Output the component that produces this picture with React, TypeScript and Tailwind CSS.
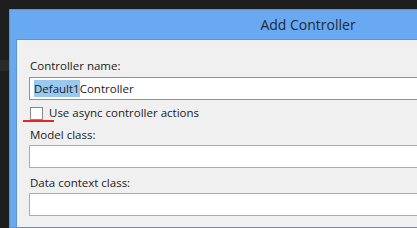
import type { ReactNode } from 'react';

function FieldLabel({ children }: { children: ReactNode }) {
  return <div className="h-4 pl-px text-[11.5px] leading-4 text-[#1a1a1a]">{children}</div>;
}

function TextBox({ focused, children }: { focused?: boolean; children?: ReactNode }) {
  return (
    <div
      className={
        'flex h-[23px] w-[560px] items-center border bg-white pl-1 text-[11.5px] text-[#1a1a1a] ' +
        (focused ? 'border-[#5c9ce4]' : 'border-[#acacac]')
      }
    >
      {children}
    </div>
  );
}

export default function App() {
  return (
    <div
      className="flex h-[228px] w-[417px] overflow-hidden bg-[#1e1e1e]"
      style={{ fontFamily: '"Open Sans", "Noto Sans", sans-serif' }}
    >
      {/* editor strip behind the dialog */}
      <div className="flex w-[9px] shrink-0 flex-col">
        <div className="h-[60px]" />
        <div className="h-[11px] bg-[#2a2a2a]" />
      </div>

      {/* dialog window */}
      <div className="mt-[9px] flex w-[598px] shrink-0 flex-col border border-[#5a92da] bg-[#69a9f2]">
        <div className="flex h-[29px] shrink-0 items-center justify-center text-[14px] text-[#1e2a38]">
          Add Controller
        </div>

        <div className="ml-[6px] flex min-h-0 flex-1 flex-col overflow-hidden border-l border-t border-[#5a92da] bg-[#f0f0f0] pl-3 pt-[18px]">
          <FieldLabel>Controller name:</FieldLabel>
          <div className="mt-[3px] shrink-0">
            <TextBox focused>
              <span className="bg-[#99c9ef]">Default1</span>
              <span>Controller</span>
            </TextBox>
          </div>

          <div className="relative mt-[6px] flex h-[14px] shrink-0 items-center gap-[6px] pl-px">
            <div className="h-[13px] w-[13px] border border-[#8a8a8a] bg-white" />
            <span className="text-[11.5px] leading-4 text-[#1a1a1a]">Use async controller actions</span>
            <div className="absolute left-[-6px] top-[14px] h-[2px] w-[31px] bg-[#e0262a]" />
          </div>

          <div className="mt-[7px] shrink-0">
            <FieldLabel>Model class:</FieldLabel>
          </div>
          <div className="mt-[2px] shrink-0">
            <TextBox />
          </div>

          <div className="mt-[7px] shrink-0">
            <FieldLabel>Data context class:</FieldLabel>
          </div>
          <div className="mt-[2px] shrink-0">
            <TextBox />
          </div>

          <div className="mt-[7px] shrink-0">
            <FieldLabel>Views:</FieldLabel>
          </div>
        </div>
      </div>
    </div>
  );
}
